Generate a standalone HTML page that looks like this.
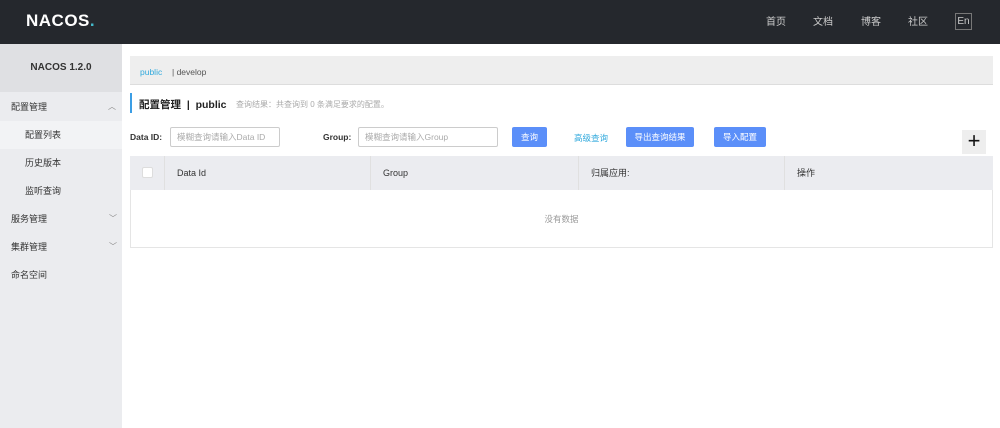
<!DOCTYPE html>
<html><head><meta charset="utf-8"><style>
*{margin:0;padding:0;box-sizing:border-box}
body{width:1000px;height:428px;overflow:hidden;background:#fff;font-family:"Liberation Sans","Noto Sans CJK SC",sans-serif;font-size:9px;color:#333;position:relative}
.a{position:absolute}
.hdr{left:0;top:0;width:1000px;height:44px;background:#25282d}
.nav{color:#ccc;font-size:10px;top:13px}
.side{left:0;top:44px;width:122px;height:384px;background:#ebecef}
.si{left:0;width:122px;height:28px;line-height:28px;font-size:9px;color:#333}
.inp{height:20px;border:1px solid #ccc;border-radius:2px;color:#aaa;line-height:18px;padding-left:6px;font-size:8.5px}
.btn{height:20px;background:#5b8ff9;color:#fff;border-radius:2px;line-height:20px;text-align:center;font-size:8.5px}
.th{top:156px;height:34px;line-height:34px;font-size:9px;color:#333;padding-left:12px;border-right:1px solid #e0e0e0}
.chev{font-size:8px;color:#888}
</style></head><body>
<div class="a hdr"></div>
<div class="a" style="left:26px;top:11px;color:#fff;font-size:17px;font-weight:bold;letter-spacing:0.5px">NACOS<span style="color:#4bc">.</span></div>
<div class="a nav" style="left:766px">首页</div>
<div class="a nav" style="left:813px">文档</div>
<div class="a nav" style="left:861px">博客</div>
<div class="a nav" style="left:908px">社区</div>
<div class="a" style="left:955px;top:13px;width:17px;height:17px;border:1px solid #777;color:#ccc;font-size:10px;text-align:center;line-height:15px">En</div>
<div class="a side"></div>
<div class="a" style="left:0;top:44px;width:122px;height:48px;background:#dfe0e3;text-align:center;line-height:48px;font-weight:bold;font-size:10px;color:#333">NACOS 1.2.0</div>
<div class="a si" style="top:93px;padding-left:11px">配置管理<span class="a chev" style="left:108px">︿</span></div>
<div class="a si" style="top:121px;padding-left:25px;background:#f2f3f5">配置列表</div>
<div class="a si" style="top:149px;padding-left:25px">历史版本</div>
<div class="a si" style="top:177px;padding-left:25px">监听查询</div>
<div class="a si" style="top:205px;padding-left:11px">服务管理<span class="a chev" style="left:109px">﹀</span></div>
<div class="a si" style="top:233px;padding-left:11px">集群管理<span class="a chev" style="left:109px">﹀</span></div>
<div class="a si" style="top:261px;padding-left:11px">命名空间</div>
<div class="a" style="left:130px;top:56px;width:863px;height:29px;background:#eeeeee;border-bottom:1px solid #ddd"></div>
<div class="a" style="left:140px;top:67px;color:#33aadd;font-size:8.5px">public</div>
<div class="a" style="left:172px;top:67px;color:#555;font-size:8.5px">| develop</div>
<div class="a" style="left:130px;top:93px;width:2px;height:20px;background:#3c9ee5"></div>
<div class="a" style="left:139px;top:97px;font-size:10.5px;font-weight:bold;color:#222">配置管理 &nbsp;|&nbsp; public</div>
<div class="a" style="left:236px;top:99px;font-size:8px;color:#aaa">查询结果：共查询到 0 条满足要求的配置。</div>
<div class="a" style="left:130px;top:132px;font-weight:bold;font-size:8.5px">Data ID:</div>
<div class="a inp" style="left:170px;top:127px;width:110px">模糊查询请输入Data ID</div>
<div class="a" style="left:323px;top:132px;font-weight:bold;font-size:8.5px">Group:</div>
<div class="a inp" style="left:358px;top:127px;width:140px">模糊查询请输入Group</div>
<div class="a btn" style="left:512px;top:127px;width:35px">查询</div>
<div class="a" style="left:574px;top:132px;color:#33aadd;font-size:8.5px">高级查询</div>
<div class="a btn" style="left:626px;top:127px;width:68px">导出查询结果</div>
<div class="a btn" style="left:714px;top:127px;width:52px">导入配置</div>
<div class="a" style="left:962px;top:130px;width:24px;height:24px;background:#eee;text-align:center;line-height:22px;font-size:22px;color:#111">+</div>
<div class="a" style="left:130px;top:156px;width:863px;height:92px;border:1px solid #e5e5e5"></div>
<div class="a" style="left:130px;top:156px;width:863px;height:34px;background:#ebecf0"></div>
<div class="a th" style="left:130px;width:35px"><div style="width:11px;height:11px;background:#fff;border:1px solid #ddd;border-radius:2px;margin-top:11px"></div></div>
<div class="a th" style="left:165px;width:206px">Data Id</div>
<div class="a th" style="left:371px;width:208px">Group</div>
<div class="a th" style="left:579px;width:206px">归属应用:</div>
<div class="a th" style="left:785px;width:208px;border:none">操作</div>
<div class="a" style="left:130px;top:213px;width:863px;text-align:center;color:#999;font-size:8.5px">没有数据</div>
</body></html>
